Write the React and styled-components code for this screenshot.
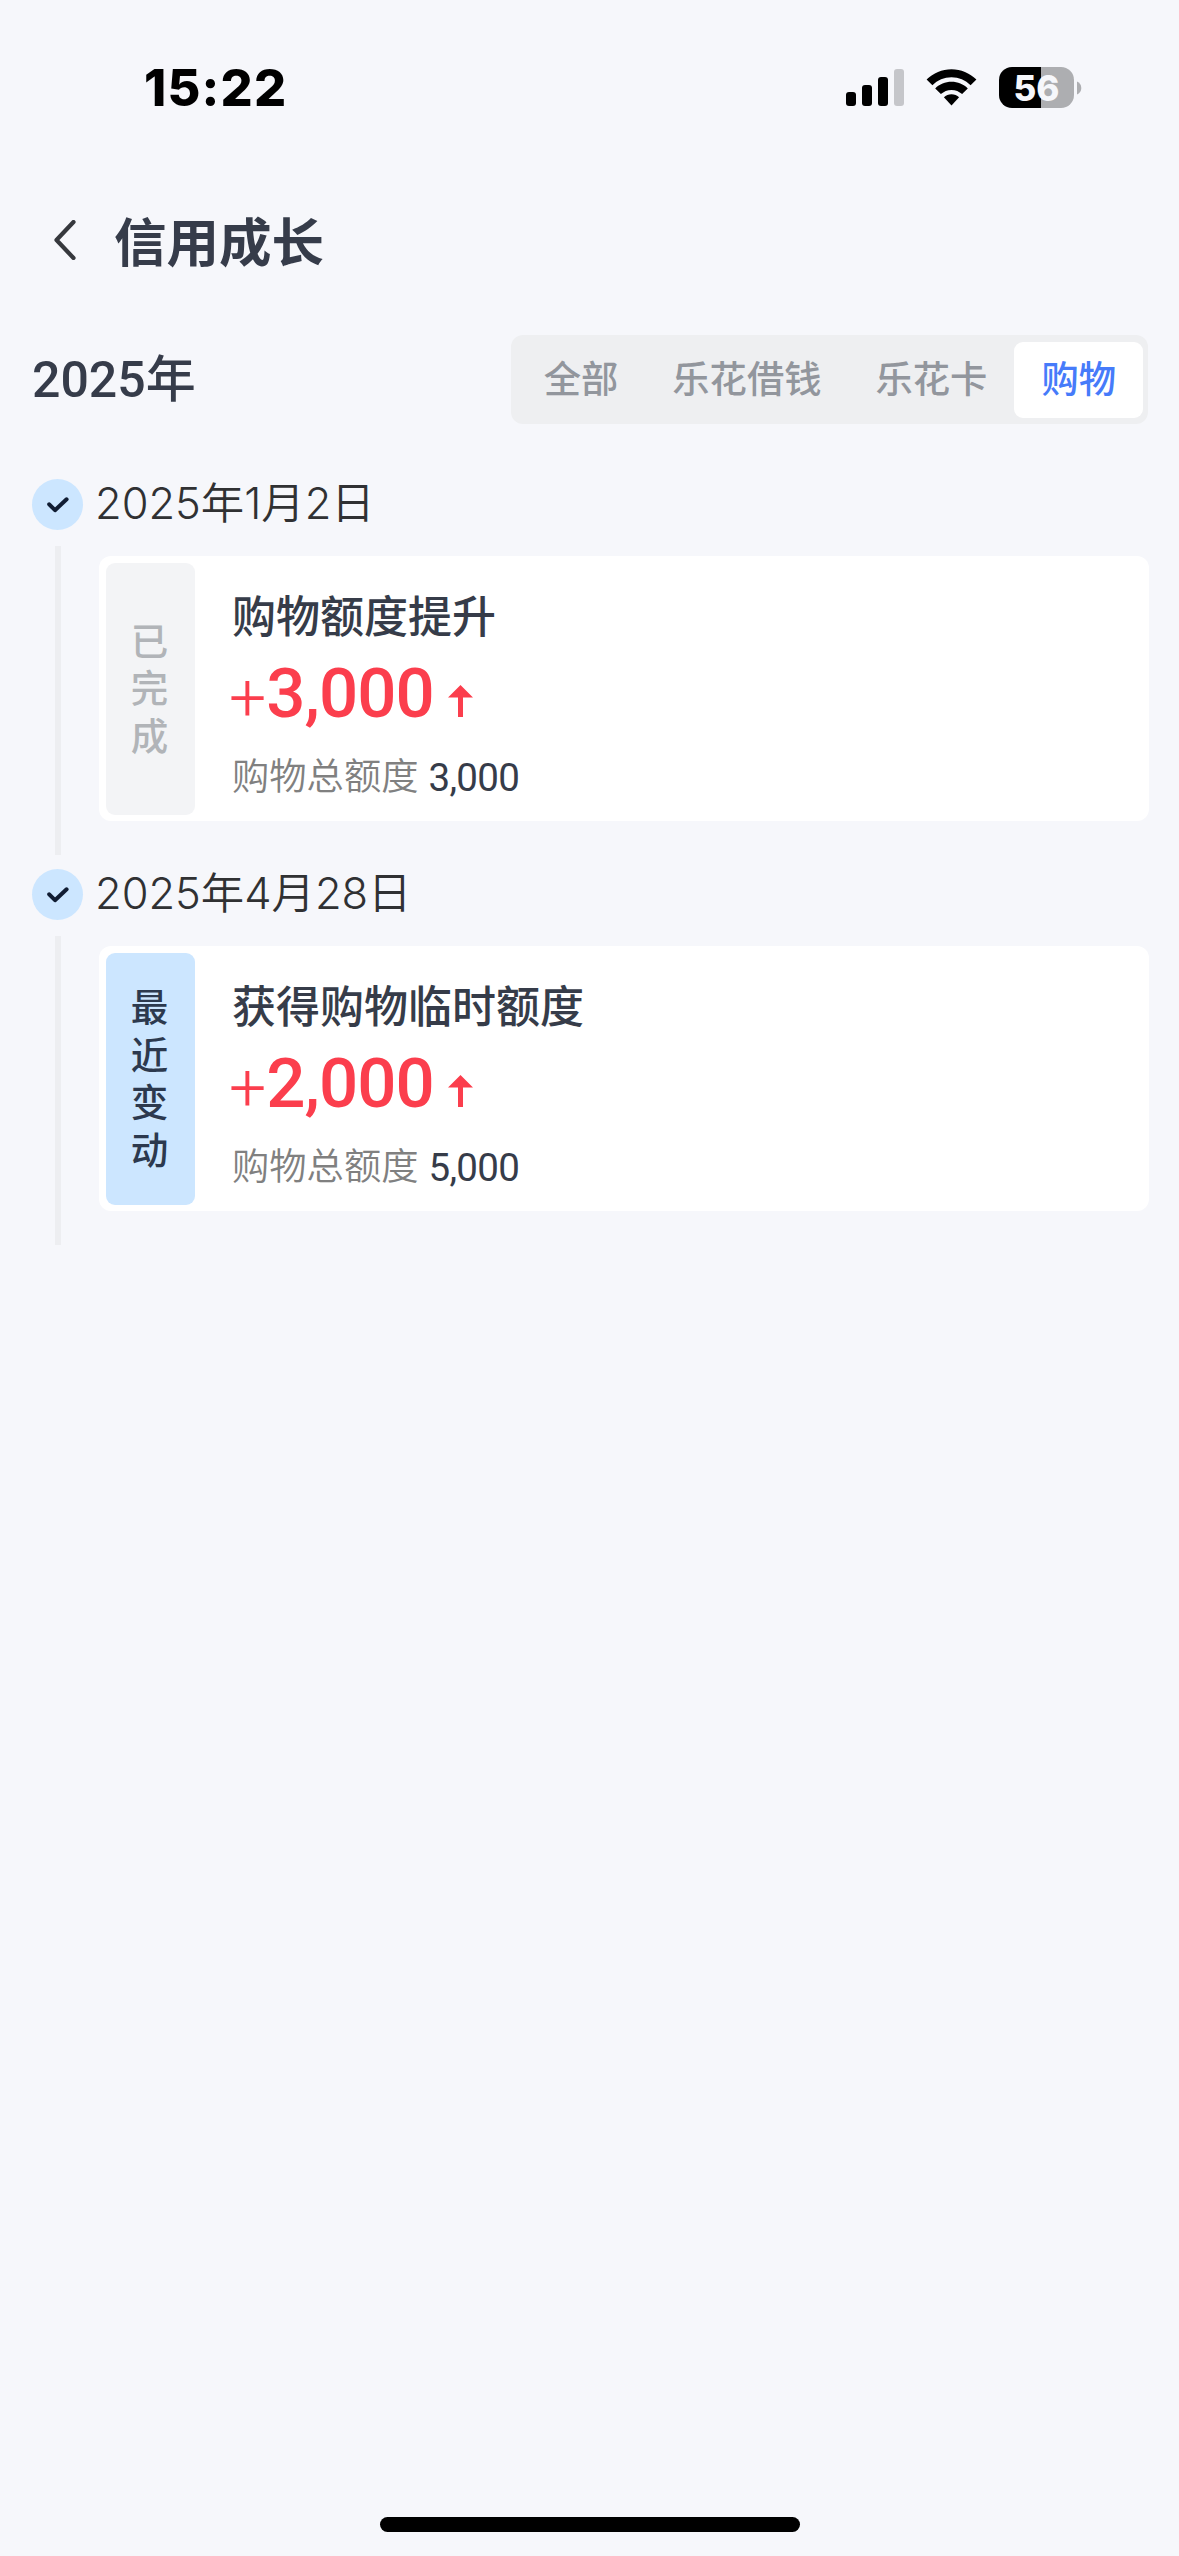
import styled, { createGlobalStyle } from "styled-components";

const TABS = ["全部", "乐花借钱", "乐花卡", "购物"];

const RECORDS = [
  {
    date: "2025年1月2日",
    status: "已完成",
    recent: false,
    title: "购物额度提升",
    amount: "3,000",
    total: "3,000",
  },
  {
    date: "2025年4月28日",
    status: "最近变动",
    recent: true,
    title: "获得购物临时额度",
    amount: "2,000",
    total: "5,000",
  },
];

function StatusBar() {
  return (
    <StatusRow>
      <Clock>15:22</Clock>
      <StatusIcons>
        <svg width="58" height="37" viewBox="0 0 58 37">
          <rect x="0" y="23" width="10" height="14" rx="3" />
          <rect x="16" y="16" width="10" height="21" rx="3" />
          <rect x="32" y="8" width="10" height="29" rx="3" />
          <rect x="48" y="0" width="10" height="37" rx="3" fill="#c5c6ca" />
        </svg>
        <svg width="51" height="37" viewBox="0 0 51 37">
          <path d="M0.6 10.6C7.4 4 16 0.2 25.5 0.2s18.100 3.800 24.900 10.400L44.600 16.200C39.400 11.200 32.800 8.300 25.500 8.300S11.600 11.200 6.400 16.200z" />
          <path d="M9.200 19.400c4.400-4.200 10-6.600 16.300-6.600s11.900 2.400 16.300 6.600l-5.700 5.700c-2.900-2.700-6.500-4.200-10.600-4.200s-7.700 1.500-10.600 4.200z" />
          <path d="M17.900 28.200c2-1.900 4.700-3 7.600-3s5.600 1.100 7.600 3L25.500 36.600z" />
        </svg>
        <Battery>
          <BatteryBody>56</BatteryBody>
          <svg width="5" height="14" viewBox="0 0 5 14">
            <path d="M0 0.500C2.600 1.400 4.300 3.900 4.300 7S2.600 12.600 0 13.500z" fill="#adaeb1" />
          </svg>
        </Battery>
      </StatusIcons>
    </StatusRow>
  );
}

function Record({ date, status, recent, title, amount, total }) {
  return (
    <RecordItem>
      <DateRow>
        <Dot>
          <svg width="22" height="16" viewBox="0 0 22 16">
            <path
              d="M2.200 7.300L8 13.200L19.600 2.300"
              fill="none"
              stroke="#111d33"
              strokeWidth="4"
              strokeLinecap="round"
              strokeLinejoin="round"
            />
          </svg>
        </Dot>
        <DateText>{date}</DateText>
      </DateRow>
      <RecordBody>
        <Line />
        <Card>
          <Badge $recent={recent}>
            {[...status].map((char) => (
              <span key={char}>{char}</span>
            ))}
          </Badge>
          <Detail>
            <CardTitle>{title}</CardTitle>
            <Amount>
              <Plus>+</Plus>
              {amount}
              <Arrow width="25" height="32" viewBox="0 0 25 32">
                <path d="M12.500 0L25 12.500H15V32H10V12.500H0z" fill="#fb3e4d" />
              </Arrow>
            </Amount>
            <Total>
              购物总额度
              <TotalValue>{total}</TotalValue>
            </Total>
          </Detail>
        </Card>
      </RecordBody>
    </RecordItem>
  );
}

export default function App() {
  return (
    <Page>
      <GlobalStyle />
      <StatusBar />
      <NavBar>
        <svg width="22" height="40" viewBox="0 0 22 40">
          <path
            d="M19.500 2L2.500 20L19.500 38"
            fill="none"
            stroke="#36383d"
            strokeWidth="4.200"
            strokeLinecap="round"
            strokeLinejoin="round"
          />
        </svg>
        <NavTitle>信用成长</NavTitle>
      </NavBar>
      <FilterRow>
        <Year>2025年</Year>
        <Tabs>
          {TABS.map((tab) => (
            <Tab key={tab} $active={tab === "购物"}>
              {tab}
            </Tab>
          ))}
        </Tabs>
      </FilterRow>
      <Timeline>
        {RECORDS.map((record) => (
          <Record key={record.title} {...record} />
        ))}
      </Timeline>
      <HomeIndicator />
    </Page>
  );
}

const GlobalStyle = createGlobalStyle`
  * {
    box-sizing: border-box;
  }

  body {
    margin: 0;
    background: #f6f7fb;
    font-family: Roboto, "Noto Sans CJK SC", sans-serif;
  }

  svg {
    display: block;
    flex-shrink: 0;
  }
`;

const Page = styled.main`
  display: flex;
  flex-direction: column;
  width: 1179px;
  height: 2556px;
  padding-bottom: 24px;
  overflow: hidden;
  background: #f6f7fb;
`;

const StatusRow = styled.header`
  display: flex;
  align-items: center;
  justify-content: space-between;
  height: 175px;
  padding: 0 97px 0 144px;
`;

const Clock = styled.span`
  font-family: Inter, sans-serif;
  font-size: 50.500px;
  font-weight: 800;
  line-height: 60px;
  letter-spacing: 1.200px;
  color: #000;
`;

const StatusIcons = styled.div`
  display: flex;
  align-items: center;
  gap: 22px;
`;

const Battery = styled.div`
  display: flex;
  align-items: center;
  gap: 3px;
`;

const BatteryBody = styled.span`
  width: 75px;
  height: 41px;
  border-radius: 13px;
  background: linear-gradient(to right, #000 42px, #adaeb1 42px);
  font-family: Inter, sans-serif;
  font-size: 35px;
  font-weight: 800;
  line-height: 42px;
  text-align: center;
  color: #f6f7fb;
`;

const NavBar = styled.nav`
  display: flex;
  align-items: center;
  gap: 38px;
  height: 130px;
  padding-left: 54px;
`;

const NavTitle = styled.h1`
  margin: 0;
  padding-top: 8px;
  font-size: 52.500px;
  font-weight: 700;
  line-height: 60px;
  color: #363c4a;
`;

const FilterRow = styled.section`
  display: flex;
  align-items: center;
  justify-content: space-between;
  height: 89px;
  margin-top: 30px;
  padding: 0 31px 0 32px;
`;

const Year = styled.h2`
  margin: 0;
  font-size: 50px;
  font-weight: 500;
  line-height: 60px;
  color: #363c4a;
`;

const Tabs = styled.div`
  display: flex;
  height: 89px;
  padding: 7px 5px 6px 6px;
  border-radius: 12px;
  background: #eeeff1;
`;

const Tab = styled.button`
  padding: 0 27px 6px;
  border: 0;
  border-radius: 9px;
  background: ${({ $active }) => ($active ? "#fff" : "transparent")};
  font-family: inherit;
  font-size: 37.300px;
  font-weight: 500;
  color: ${({ $active }) => ($active ? "#467bfa" : "#92969d")};
`;

const Timeline = styled.ul`
  display: flex;
  flex-direction: column;
  flex: 1;
  margin: 0;
  padding: 55px 30px 0 32px;
  list-style: none;
`;

const RecordItem = styled.li`
  height: 390px;
`;

const DateRow = styled.div`
  display: flex;
  align-items: center;
  gap: 12px;
  height: 51px;
`;

const Dot = styled.span`
  display: flex;
  align-items: center;
  justify-content: center;
  width: 51px;
  height: 51px;
  border-radius: 50%;
  background: #cce6ff;
`;

const DateText = styled.time`
  padding-bottom: 4px;
  font-family: Inter, "Noto Sans CJK SC", sans-serif;
  font-size: 43.400px;
  font-weight: 350;
  line-height: 50px;
  color: #303133;
`;

const RecordBody = styled.div`
  display: flex;
  align-items: flex-start;
  gap: 38px;
  padding: 16px 0 0 23px;
`;

const Line = styled.span`
  width: 6px;
  height: 309px;
  background: #edeef1;
`;

const Card = styled.article`
  display: flex;
  flex: 1;
  gap: 37px;
  height: 265px;
  margin-top: 10px;
  padding: 7px 7px 6px;
  border-radius: 12px;
  background: #fff;
`;

const Badge = styled.div`
  display: flex;
  flex-direction: column;
  align-items: center;
  justify-content: center;
  width: 89px;
  padding: 2px 2px 0 0;
  border-radius: 9px;
  background: ${({ $recent }) => ($recent ? "#cce6ff" : "#f3f4f6")};
  font-size: 37.500px;
  font-weight: 500;
  line-height: 47.500px;
  color: ${({ $recent }) => ($recent ? "#2c394e" : "#b1b4b8")};
`;

const Detail = styled.div`
  display: flex;
  flex-direction: column;
  padding-top: 25px;
`;

const CardTitle = styled.h3`
  margin: 0;
  font-size: 44px;
  font-weight: 500;
  line-height: 60px;
  color: #363c49;
`;

const Amount = styled.div`
  display: flex;
  align-items: baseline;
  height: 91px;
  font-size: 69px;
  font-weight: 500;
  line-height: 92px;
  letter-spacing: -1px;
  color: #fb3e4d;
`;

const Plus = styled.span`
  align-self: flex-start;
  margin: 0 1px 0 -3px;
  font-size: 66px;
  font-weight: 350;
  line-height: 101px;
`;

const Arrow = styled.svg`
  margin-left: 14px;
`;

const Total = styled.p`
  display: flex;
  gap: 10px;
  margin: 0;
  font-size: 37.300px;
  font-weight: 350;
  line-height: 76px;
  color: #808080;
`;

const TotalValue = styled.span`
  padding-top: 1px;
  font-size: 38.500px;
  font-weight: 400;
  letter-spacing: -0.700px;
  color: #363c49;
`;

const HomeIndicator = styled.footer`
  align-self: center;
  width: 420px;
  height: 15px;
  border-radius: 8px;
  background: #000;
`;
